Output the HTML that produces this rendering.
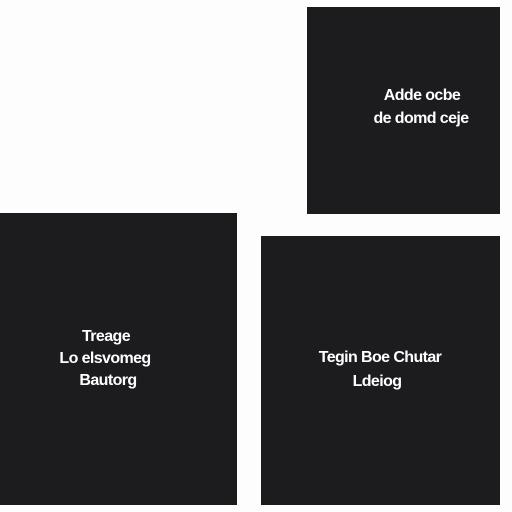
<!DOCTYPE html>
<html><head><style>
body{margin:0;width:512px;height:512px;background:#fdfdfd;position:relative;overflow:hidden;font-family:"Liberation Sans",sans-serif;}
.b{position:absolute;background:#1c1b1e;}
.t{position:absolute;color:#fff;font-weight:bold;font-size:16px;letter-spacing:-0.6px;white-space:nowrap;transform:translateX(-50%);line-height:1;}
</style></head><body>
<div class="b" style="left:307px;top:7px;width:193px;height:207px"></div>
<div class="b" style="left:0;top:213px;width:237px;height:292px"></div>
<div class="b" style="left:261px;top:236px;width:239px;height:269px"></div>
<div class="t" style="left:422px;top:88px">Adde ocbe</div>
<div class="t" style="left:421px;top:111px">de domd ceje</div>
<div class="t" style="left:106px;top:329px">Treage</div>
<div class="t" style="left:105px;top:351px">Lo elsvomeg</div>
<div class="t" style="left:108px;top:373px">Bautorg</div>
<div class="t" style="left:380px;top:350px">Tegin Boe Chutar</div>
<div class="t" style="left:377px;top:374px">Ldeiog</div>
</body></html>
